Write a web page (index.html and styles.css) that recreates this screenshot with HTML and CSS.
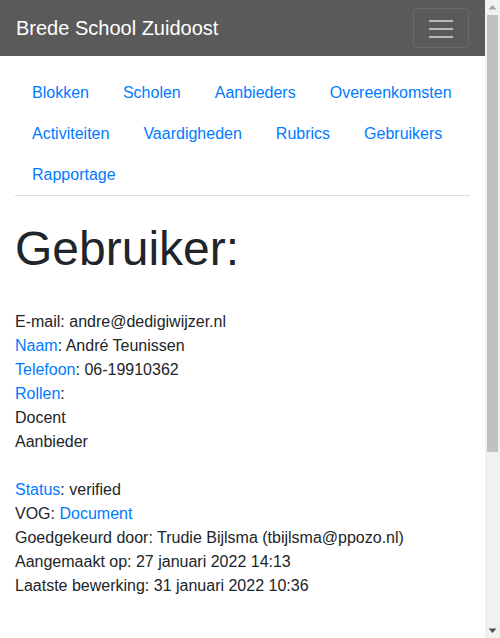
FILE: index.html
```html
<!DOCTYPE html>
<html lang="nl">
<head>
<meta charset="utf-8">
<title>Gebruiker</title>
<link rel="stylesheet" href="styles.css">
</head>
<body>
<div class="page">
  <header class="navbar">
    <a class="brand" href="#">Brede School Zuidoost</a>
    <button class="toggler" type="button" aria-label="Menu">
      <svg width="24" height="18" viewBox="0 0 24 18" aria-hidden="true">
        <rect x="0" y="1" width="24" height="2" fill="#bcbcbc"/>
        <rect x="0" y="9" width="24" height="2" fill="#bcbcbc"/>
        <rect x="0" y="17" width="24" height="2" fill="#bcbcbc"/>
      </svg>
    </button>
  </header>
  <main class="container">
    <nav class="subnav">
      <a href="#">Blokken</a>
      <a href="#">Scholen</a>
      <a href="#">Aanbieders</a>
      <a href="#">Overeenkomsten</a>
      <a href="#">Activiteiten</a>
      <a href="#">Vaardigheden</a>
      <a href="#">Rubrics</a>
      <a href="#">Gebruikers</a>
      <a href="#">Rapportage</a>
    </nav>
    <h1 class="title">Gebruiker:</h1>
    <div class="details">
      <div>E-mail: andre@dedigiwijzer.nl</div>
      <div><span class="lbl">Naam</span>: André Teunissen</div>
      <div><span class="lbl">Telefoon</span>: 06-19910362</div>
      <div><span class="lbl">Rollen</span>:</div>
      <div class="roles">
        <div>Docent</div>
        <div>Aanbieder</div>
      </div>
      <div><span class="lbl">Status</span>: verified</div>
      <div>VOG: <a href="#">Document</a></div>
      <div>Goedgekeurd door: Trudie Bijlsma (tbijlsma@ppozo.nl)</div>
      <div>Aangemaakt op: 27 januari 2022 14:13</div>
      <div>Laatste bewerking: 31 januari 2022 10:36</div>
    </div>
  </main>
</div>
<div class="scrollbar" aria-hidden="true">
  <div class="sb-btn">
    <svg width="15" height="15" viewBox="0 0 15 15"><polygon points="3.5,9.5 11.5,9.5 7.5,5" fill="#a3a3a3"/></svg>
  </div>
  <div class="sb-track">
    <div class="sb-thumb"></div>
  </div>
  <div class="sb-btn">
    <svg width="15" height="15" viewBox="0 0 15 15"><polygon points="3.5,5.5 11.5,5.5 7.5,10" fill="#505050"/></svg>
  </div>
</div>
</body>
</html>
```
FILE: styles.css
```css
html, body {
  margin: 0;
  padding: 0;
}
body {
  font-family: "Liberation Sans", Arial, sans-serif;
  font-size: 16px;
  line-height: 24px;
  color: #212529;
  background: #fff;
  display: grid;
  grid-template-columns: 485px 15px;
  align-items: start;
}
a {
  color: #007bff;
  text-decoration: none;
}
.page {
  min-width: 0;
}
.navbar {
  height: 56px;
  box-sizing: border-box;
  background: #5a5a5a;
  padding: 8px 16px;
  display: flex;
  align-items: center;
  justify-content: space-between;
}
.brand {
  color: #fff;
  font-size: 20px;
  line-height: 30px;
}
.toggler {
  width: 56px;
  height: 40px;
  box-sizing: border-box;
  background: transparent;
  border: 1px solid rgba(255,255,255,0.1);
  border-radius: 4px;
  padding: 0;
  display: flex;
  align-items: center;
  justify-content: center;
}
.toggler svg {
  display: block;
  overflow: visible;
}
.container {
  padding: 16px 15px 290px;
}
.subnav {
  display: flex;
  flex-wrap: wrap;
  border-bottom: 1px solid #dedede;
}
.subnav a {
  padding: 8px 17px;
  line-height: 25px;
}
.title {
  font-size: 48px;
  font-weight: 400;
  line-height: 1.2;
  margin: 24px 0 32px;
}
.roles {
  margin-bottom: 24px;
}
.lbl {
  color: #007bff;
}
.scrollbar {
  position: sticky;
  top: 0;
  height: 100vh;
  background: #f1f1f1;
  display: flex;
  flex-direction: column;
}
.sb-btn {
  height: 15px;
  flex: none;
}
.sb-btn svg {
  display: block;
}
.sb-track {
  flex: 1;
  padding: 0 2px;
}
.sb-thumb {
  height: 437px;
  background: #c1c1c1;
}
```
